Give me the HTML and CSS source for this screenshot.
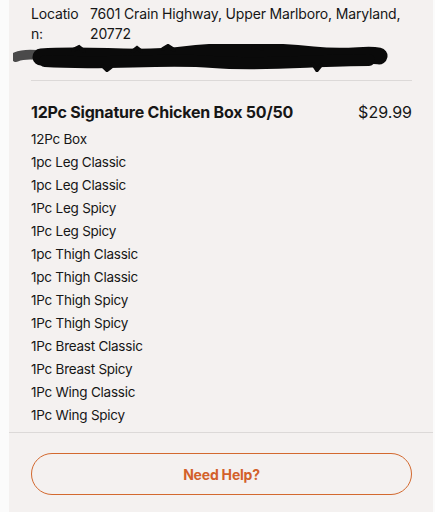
FILE: index.html
```html
<!DOCTYPE html>
<html>
<head>
<meta charset="utf-8">
<link rel="stylesheet" href="styles.css">
</head>
<body>
<div class="page">
  <div class="panel">
    <div class="inner">
      <div class="loc-row">
        <div class="loc-label">Location:</div>
        <div class="loc-value">7601 Crain Highway, Upper Marlboro, Maryland, 20772</div>
      </div>
      <div class="redact">
        <svg width="380" height="28" viewBox="0 0 380 28">
          <path d="M3 13 C 10 10, 20 10, 32 12" stroke="#4a4a4a" stroke-width="10" fill="none" stroke-linecap="round"/>
          <path d="M28 13 C 80 9, 120 17, 170 11 S 260 7, 300 11 S 350 9, 366 12" stroke="#0a0a0a" stroke-width="17" fill="none" stroke-linecap="round"/>
          <path d="M32 17 C 90 21, 150 14, 200 18 S 300 16, 356 16" stroke="#0a0a0a" stroke-width="12" fill="none" stroke-linecap="round"/>
          <path d="M60 6 l6 -3 l5 4 M120 7 l4 -3 l4 3 M150 5 l5 -3 l6 4 M240 4 l4 -2 l5 3 M300 20 l4 6 l4 -5 M90 22 l4 4 l4 -3" stroke="#0a0a0a" stroke-width="4" fill="none" stroke-linecap="round"/>
        </svg>
      </div>
    </div>
    <div class="divider inset"></div>
    <div class="inner">
      <div class="title-row">
        <div class="title">12Pc Signature Chicken Box 50/50</div>
        <div class="price">$29.99</div>
      </div>
      <ul class="items">
        <li>12Pc Box</li>
        <li>1pc Leg Classic</li>
        <li>1pc Leg Classic</li>
        <li>1Pc Leg Spicy</li>
        <li>1Pc Leg Spicy</li>
        <li>1pc Thigh Classic</li>
        <li>1pc Thigh Classic</li>
        <li>1Pc Thigh Spicy</li>
        <li>1Pc Thigh Spicy</li>
        <li>1Pc Breast Classic</li>
        <li>1Pc Breast Spicy</li>
        <li>1Pc Wing Classic</li>
        <li>1Pc Wing Spicy</li>
      </ul>
    </div>
    <div class="divider full"></div>
    <div class="inner">
      <button class="help">Need Help?</button>
    </div>
  </div>
</div>
</body>
</html>
```
FILE: styles.css
```css
html, body {
  margin: 0;
  padding: 0;
  background: #fbfbfb;
  font-family: Inter, "Noto Sans", sans-serif;
  color: #161616;
}
.page {
  display: flex;
  height: 512px;
  padding-left: 9px;
  padding-right: 2px;
}
.panel {
  flex: 1;
  background: #f4f1f0;
  padding-top: 4px;
}
.inner {
  padding: 0 21px 0 22px;
}
.loc-row {
  display: grid;
  grid-template-columns: 59px 1fr;
  font-size: 14px;
  line-height: 20px;
  letter-spacing: -0.16px;
}
.loc-label {
  width: 54px;
  overflow-wrap: anywhere;
  word-break: break-all;
}
.redact {
  height: 24px;
  margin-left: -18px;
}
.redact svg {
  display: block;
}
.divider {
  height: 1px;
  background: #dcd9d8;
}
.divider.inset {
  margin: 12px 21px 0 22px;
}
.divider.full {
  margin-top: 5px;
}
.title-row {
  display: flex;
  justify-content: space-between;
  align-items: center;
  margin-top: 20px;
  line-height: 22px;
}
.title {
  font-weight: 700;
  font-size: 16px;
  letter-spacing: -0.22px;
}
.price {
  font-size: 16px;
}
.items {
  list-style: none;
  margin: 5px 0 0;
  padding: 0;
  font-size: 13.5px;
  letter-spacing: -0.25px;
  line-height: 23px;
}
.help {
  display: block;
  width: 100%;
  height: 42px;
  margin-top: 20px;
  border: 1.5px solid #d3692f;
  border-radius: 21px;
  background: transparent;
  color: #d3602a;
  font-family: Inter, "Noto Sans", sans-serif;
  font-weight: 700;
  font-size: 14px;
  letter-spacing: -0.2px;
}
```
